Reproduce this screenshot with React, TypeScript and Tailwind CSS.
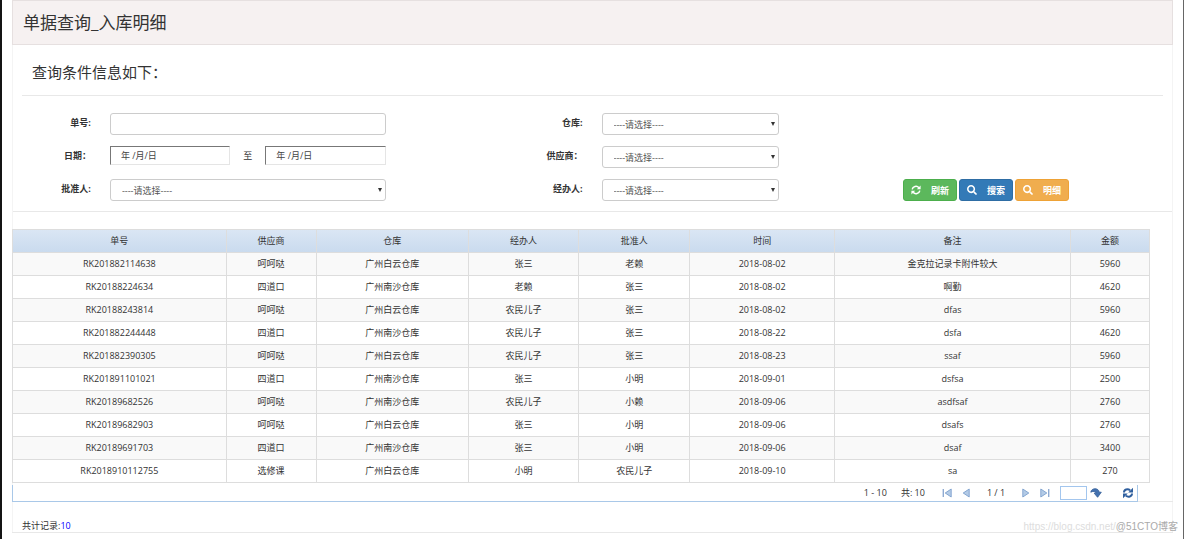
import React from "react";
import { FaSearch } from "react-icons/fa";

const columns = [
  { title: "单号", width: "w-[18.8%]" },
  { title: "供应商", width: "w-[7.9%]" },
  { title: "仓库", width: "w-[13.4%]" },
  { title: "经办人", width: "w-[9.7%]" },
  { title: "批准人", width: "w-[9.8%]" },
  { title: "时间", width: "w-[12.7%]" },
  { title: "备注", width: "w-[20.8%]" },
  { title: "金额", width: "w-[6.9%]" },
];

const rows = [
  ["RK201882114638", "呵呵哒", "广州白云仓库", "张三", "老赖", "2018-08-02", "金克拉记录卡附件较大", "5960"],
  ["RK20188224634", "四道口", "广州南沙仓库", "老赖", "张三", "2018-08-02", "啊勤", "4620"],
  ["RK20188243814", "呵呵哒", "广州白云仓库", "农民儿子", "张三", "2018-08-02", "dfas", "5960"],
  ["RK201882244448", "四道口", "广州南沙仓库", "农民儿子", "张三", "2018-08-22", "dsfa", "4620"],
  ["RK201882390305", "呵呵哒", "广州白云仓库", "农民儿子", "张三", "2018-08-23", "ssaf", "5960"],
  ["RK201891101021", "四道口", "广州南沙仓库", "张三", "小明", "2018-09-01", "dsfsa", "2500"],
  ["RK20189682526", "呵呵哒", "广州南沙仓库", "农民儿子", "小赖", "2018-09-06", "asdfsaf", "2760"],
  ["RK20189682903", "呵呵哒", "广州白云仓库", "张三", "小明", "2018-09-06", "dsafs", "2760"],
  ["RK20189691703", "四道口", "广州南沙仓库", "张三", "小明", "2018-09-06", "dsaf", "3400"],
  ["RK2018910112755", "选修课", "广州白云仓库", "小明", "农民儿子", "2018-09-10", "sa", "270"],
];

function Label({ id, children }: { id: string; children: React.ReactNode }) {
  return (
    <label htmlFor={id} className="h-[22px] text-right font-bold leading-5 whitespace-nowrap">
      {children}
    </label>
  );
}

function Select({ id }: { id: string }) {
  return (
    <div className="relative min-w-0">
      <select
        id={id}
        className="block h-[22px] w-full appearance-none rounded-[3px] border border-[#ccc] bg-white px-[11px] pt-[2px] text-[#555]"
      >
        <option>----请选择----</option>
      </select>
      <svg viewBox="0 0 5 5" className="pointer-events-none absolute top-[9px] right-1 size-1" aria-hidden="true">
        <path d="M0 0h5L2.5 5z" fill="#333" />
      </svg>
    </div>
  );
}

function DateInput({ id, label }: { id: string; label: string }) {
  return (
    <input
      id={id}
      aria-label={label}
      placeholder="年 /月/日"
      className="h-[19px] min-w-0 flex-1 border border-t-[#777] border-r-[#e5e5e5] border-b-[#e5e5e5] border-l-[#777] bg-white px-[10px] placeholder:text-[#444]"
    />
  );
}

function RefreshIcon() {
  return (
    <svg viewBox="0 0 10 10" className="size-[10px]" fill="none" stroke="#fff" strokeWidth="1.5" aria-hidden="true">
      <path d="M1.200 4.400A3.800 3.600 0 0 1 7.900 2.700M8.800 5.600A3.800 3.600 0 0 1 2.100 7.300" />
      <path d="M9.600 0.500v3.800H5.800zM0.400 9.500V5.700h3.800z" fill="#fff" stroke="none" />
    </svg>
  );
}

function ActionButton({ icon, className, children }: { icon: React.ReactNode; className: string; children: React.ReactNode }) {
  return (
    <button
      type="button"
      className={`flex h-[22px] w-[54px] items-center justify-between rounded-[3px] border pr-[7px] pl-[7px] font-bold text-white ${className}`}
    >
      {icon}
      <span className="pt-[2px]">{children}</span>
    </button>
  );
}

function Arrow({ flip, bar, label }: { flip?: boolean; bar?: boolean; label: string }) {
  return (
    <button type="button" aria-label={label} className="flex">
      <svg viewBox="0 0 10 10" className={flip ? "size-[10px] rotate-180" : "size-[10px]"} aria-hidden="true">
        <path d="M0.8 1v8L6.8 5z" fill="#b4cbe6" stroke="#7c9fcd" strokeWidth="0.9" strokeLinejoin="round" />
        {bar && <path d="M8 1h1.4v8H8z" fill="#8fabd2" />}
      </svg>
    </button>
  );
}

export default function App() {
  return (
    <div className="relative min-h-screen overflow-hidden border-r border-l-2 border-r-[#666] border-l-[#141414] bg-white px-[10px] font-['Open_Sans','Noto_Sans_CJK_SC',sans-serif] text-[9px] leading-4 text-[#333]">
      <main className="border-x border-[#f4f4f4]">
        <header className="-mx-px flex h-[45px] items-center border border-[#e6e0e0] bg-[#f6f1f1] px-[10px]">
          <h1 className="text-[17px] leading-6 text-[#333]">单据查询_入库明细</h1>
        </header>

        <h2 className="mx-[9px] flex h-[51px] items-center border-b border-[#e8e8e8] px-[10px] pt-[3px] text-[15px] leading-6">
          查询条件信息如下：
        </h2>

        <form className="grid grid-cols-[78fr_276fr_178fr_178fr_374fr] gap-x-[19px] gap-y-[11px] border-b border-[#e8e8e8] pt-[17px] pb-[10px]">
          <Label id="bill">单号:</Label>
          <input
            id="bill"
            className="h-[22px] w-full min-w-0 rounded-[3px] border border-[#ccc] bg-white px-[10px] text-[#555]"
          />
          <Label id="store">仓库:</Label>
          <Select id="store" />
          <span />

          <Label id="from">日期：</Label>
          <div className="flex min-w-0">
            <DateInput id="from" label="开始日期" />
            <span className="w-[35px] text-center leading-[19px]">至</span>
            <DateInput id="to" label="结束日期" />
          </div>
          <Label id="supplier">供应商：</Label>
          <Select id="supplier" />
          <span />

          <Label id="approver">批准人:</Label>
          <Select id="approver" />
          <Label id="handler">经办人:</Label>
          <Select id="handler" />
          <div className="flex justify-end gap-[2px] pr-[103px]">
            <ActionButton icon={<RefreshIcon />} className="border-[#4cae4c] bg-[#5cb85c]">
              刷新
            </ActionButton>
            <ActionButton icon={<FaSearch className="size-[10px]" />} className="border-[#2e6da4] bg-[#337ab7]">
              搜索
            </ActionButton>
            <ActionButton icon={<FaSearch className="size-[10px]" />} className="border-[#eea236] bg-[#f0ad4e]">
              明细
            </ActionButton>
          </div>
        </form>

        <section className="-mx-px border-b border-[#e8e8e8] pt-[17px]">
          <table className="w-[98%] table-fixed border-collapse text-center">
            <thead>
              <tr className="h-[23px] bg-linear-to-b from-[#dae6f4] to-[#c9daee]">
                {columns.map((column) => (
                  <th key={column.title} className={`border border-[#ddd] p-0 font-normal ${column.width}`}>
                    {column.title}
                  </th>
                ))}
              </tr>
            </thead>
            <tbody>
              {rows.map((row) => (
                <tr key={row[0]} className="h-[23px] odd:bg-[#f9f9f9]">
                  {row.map((cell, index) => (
                    <td key={index} className="border border-[#ddd] p-0">
                      {cell}
                    </td>
                  ))}
                </tr>
              ))}
            </tbody>
          </table>

          <nav
            aria-label="分页"
            className="mt-[2px] -mb-px flex h-[17px] w-[97%] items-center justify-end border border-t-0 border-[#a9c8e8] pr-[3px]"
          >
            <span className="mr-[14px]">1 - 10</span>
            <span className="mr-[17px]">共: 10</span>
            <span className="flex gap-2">
              <Arrow flip bar label="首页" />
              <Arrow flip label="上一页" />
            </span>
            <span className="mx-[17px]">1 / 1</span>
            <span className="flex gap-2">
              <Arrow label="下一页" />
              <Arrow bar label="末页" />
            </span>
            <input aria-label="页码" className="ml-[10px] h-[14px] w-[27px] border border-[#a3c6ee] bg-white px-1" />
            <button type="button" aria-label="跳转" className="ml-[3px] flex">
              <svg viewBox="0 0 12 12" className="size-3" aria-hidden="true">
                <path
                  d="M0.800 5.200C1.200 0.800 8.600 0.300 9.200 5.200h2.100L7.600 10.300 4.200 6.200h2C5.600 4.400 2.700 3.900 0.800 5.200z"
                  fill="#4472b0"
                  stroke="#2f5b96"
                  strokeWidth="0.8"
                  strokeLinejoin="round"
                />
              </svg>
            </button>
            <button type="button" aria-label="刷新列表" className="ml-5 flex">
              <svg viewBox="0 0 12 12" className="size-3" fill="none" stroke="#2f5f9e" aria-hidden="true">
                <path d="M2 5.400C2 2.400 5.600 1.400 8.200 3.200M10 6.600c0 3-3.600 4-6.200 2.200" strokeWidth="2" />
                <path d="M11 0.700v4.800H6.200zM1 11.300V6.500h4.800z" fill="#2f5f9e" stroke="none" />
              </svg>
            </button>
          </nav>
        </section>

        <footer className="-mx-px border-b border-[#e8e8e8] px-[10px] pt-[18px] leading-3">
          共计记录:<span className="text-[#00f]">10</span>
        </footer>
      </main>

      <div className="pointer-events-none absolute right-[5px] bottom-[5px] flex font-['Liberation_Sans','Noto_Sans_CJK_SC',sans-serif] text-[10px] leading-[14px]">
        <span className="text-[#ddd]">https://blog.csdn.net/</span>
        <span className="text-[#aaa]">@51CTO博客</span>
      </div>
    </div>
  );
}
